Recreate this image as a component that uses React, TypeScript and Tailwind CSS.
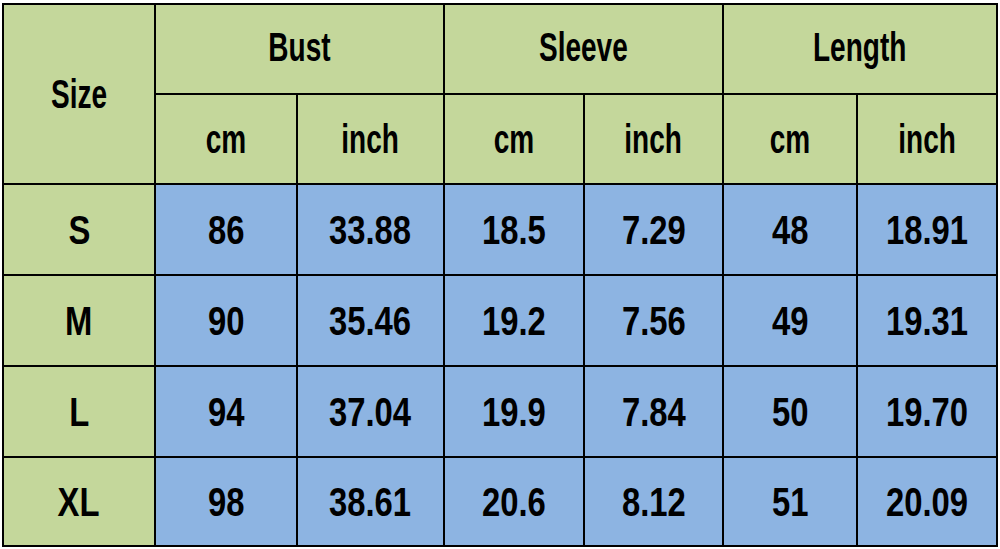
const rows = [
  ['S', '86', '33.88', '18.5', '7.29', '48', '18.91'],
  ['M', '90', '35.46', '19.2', '7.56', '49', '19.31'],
  ['L', '94', '37.04', '19.9', '7.84', '50', '19.70'],
  ['XL', '98', '38.61', '20.6', '8.12', '51', '20.09'],
];

const font = { fontFamily: '"Liberation Sans", Arial, sans-serif' };

function Cell({ children, className, word }: { children: React.ReactNode; className: string; word?: boolean }) {
  return (
    <div className={`${className} flex items-center justify-center`}>
      <span className={`inline-block ${word ? 'scale-x-[0.7]' : 'scale-x-[0.82]'}`}>{children}</span>
    </div>
  );
}

export default function App() {
  return (
    <div className="w-[1000px] h-[549px] bg-white pt-[3px] pl-[2px]">
      <div
        style={font}
        className="grid grid-cols-[150px_140px_145px_138px_137px_132px_138px] grid-rows-[88px_88px_89px_89px_89px_87px] gap-[2px] p-[2px] bg-black w-fit text-[40px] font-bold text-black leading-none"
      >
        <Cell word className="row-span-2 bg-[#c4d79b]">Size</Cell>
        <Cell word className="col-span-2 bg-[#c4d79b] pb-[4px]">Bust</Cell>
        <Cell word className="col-span-2 bg-[#c4d79b] pb-[4px]">Sleeve</Cell>
        <Cell word className="col-span-2 bg-[#c4d79b] pb-[4px]">Length</Cell>
        {['cm', 'inch', 'cm', 'inch', 'cm', 'inch'].map((u, i) => (
          <Cell word key={i} className="bg-[#c4d79b]">
            {u}
          </Cell>
        ))}
        {rows.map((r) =>
          r.map((v, i) => (
            <Cell key={r[0] + i} className={i === 0 ? 'bg-[#c4d79b]' : 'bg-[#8db4e2]'}>
              {v}
            </Cell>
          ))
        )}
      </div>
    </div>
  );
}
